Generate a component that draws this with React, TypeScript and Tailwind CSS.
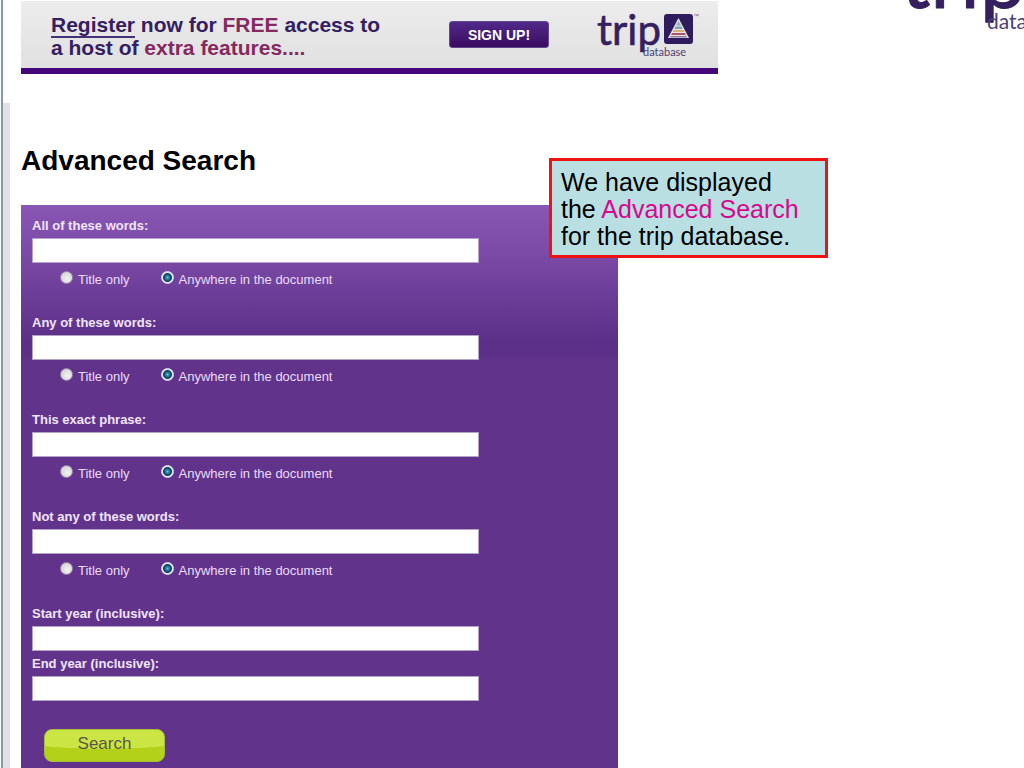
const wordFields = [
  { id: "all", label: "All of these words:" },
  { id: "any", label: "Any of these words:" },
  { id: "phrase", label: "This exact phrase:" },
  { id: "none", label: "Not any of these words:" },
];

const inputClass = "block h-[25px] w-full border border-[#b3a3c6] bg-white px-1 text-sm text-black outline-none";
const labelClass = "block text-[13px] leading-[18px] font-bold text-[#f1e6fa]";
const radioClass =
  "size-[13px] appearance-none rounded-full border border-[#9a8aa8] bg-[radial-gradient(circle_at_60%_60%,#f4f4f2,#c9c6cc)] checked:border-[#d5dce4] checked:bg-[radial-gradient(circle,#6fc4da_0px,#1e7896_2px,#123a5c_4px,#e8eef0_5px,#dfe4e8_6px)]";

function SmallLogo() {
  return (
    <svg width="108" height="50" viewBox="0 0 108 50" role="img" aria-label="trip database">
      <text x="3" y="35" fontFamily="Lato, sans-serif" fontSize="42" fill="#35205f" stroke="#35205f" strokeWidth="0.6" strokeLinejoin="round">
        trip
      </text>
      <text x="49" y="46" fontFamily="Lato, sans-serif" fontSize="11" fill="#4d4175">
        database
      </text>
      <rect x="70" y="4" width="29" height="30" rx="3" fill="#2e1c5c" />
      <path d="M84.5 8 95 28H74Z" fill="#e9e2e4" />
      <path d="M84.5 11 87 15.5H82Z" fill="#8fb0b5" />
      <path d="M81.5 16.5H87.5L88.5 19H80.5Z" fill="#7fa4b4" />
      <path d="M79.5 20H89.5L90.5 22H78.5Z" fill="#d9b07c" />
      <path d="M78 23H91L92 25H77Z" fill="#a95768" />
      <path d="M76.5 26H92.5L93 27.5H76Z" fill="#8d7aa5" />
      <text x="99" y="8" fontFamily="Liberation Sans, sans-serif" fontSize="6" fill="#6d6388">
        ™
      </text>
    </svg>
  );
}

function LargeLogo() {
  return (
    <svg width="124" height="34" viewBox="0 0 124 34" className="ml-auto shrink-0" role="img" aria-label="trip database">
      <text x="1" y="8" fontFamily="Lato, sans-serif" fontSize="82" fill="#35205f" stroke="#35205f" strokeWidth="1" strokeLinejoin="round">
        trip
      </text>
      <text x="87" y="29" fontFamily="Lato, sans-serif" fontSize="21" fill="#4d4175">
        database
      </text>
    </svg>
  );
}

function Banner() {
  return (
    <div className="mt-px flex h-[73px] w-full max-w-[697px] items-start border-b-[6px] border-[#45087a] bg-linear-to-b from-[#ededed] to-[#e0e0e0] pr-4 pl-[30px]">
      <p className="pt-3 text-[21px] leading-[23px] font-bold text-[#35205f]">
        <a href="#register" className="border-b-2 border-[#45307a]">Register</a> now for <span className="text-[#842a5e]">FREE</span> access to
        <br />a host of <span className="text-[#842a5e]">extra features....</span>
      </p>
      <button className="mt-5 ml-auto h-[27px] w-[100px] rounded-[3px] border border-[#62498c] bg-linear-to-b from-[#51298a] to-[#3a0b60] text-sm font-bold text-white">
        SIGN UP!
      </button>
      <div className="ml-[45px] pt-[9px]">
        <SmallLogo />
      </div>
    </div>
  );
}

function WordField({ id, label }: { id: string; label: string }) {
  return (
    <div className="mb-6">
      <label htmlFor={id} className={labelClass}>{label}</label>
      <input id={id} type="text" className={`mt-[3px] ${inputClass}`} />
      <div className="mt-[7px] flex gap-[31px] pl-7 text-[13px] leading-5 text-[#eadcf6]">
        <label className="flex items-start gap-[5px]">
          <input type="radio" name={`${id}-scope`} className={`mt-px ${radioClass}`} />
          Title only
        </label>
        <label className="flex items-start gap-[5px]">
          <input type="radio" name={`${id}-scope`} defaultChecked className={`mt-px ${radioClass}`} />
          Anywhere in the document
        </label>
      </div>
    </div>
  );
}

export default function App() {
  return (
    <div className="flex min-h-screen overflow-hidden bg-white pl-px font-['Liberation_Sans',Arial,sans-serif]">
      <div className="flex w-[9px] shrink-0 flex-col border-l-2 border-[#8299b3]">
        <div className="h-[103px]" />
        <div className="flex-1 bg-[#e2e2e2]" />
      </div>
      <div className="flex min-w-0 flex-1 flex-col pl-[11px]">
        <header className="flex items-start">
          <Banner />
          <LargeLogo />
        </header>
        <h1 className="mt-[71px] text-[28px] leading-8 font-bold text-black">Advanced Search</h1>
        <div className="relative mt-7 flex w-full max-w-[597px] flex-1 flex-col">
          <form
            className="flex-1 bg-[#62338b] bg-[linear-gradient(to_bottom,#8856b3_0px,#7b4aa6_50px,#5c3088_135px,#5c3088_150px,#62338b_156px)] px-[11px] pt-3 pb-[6px]"
            onSubmit={(e) => e.preventDefault()}
          >
            <div className="max-w-[447px]">
              {wordFields.map((f) => (
                <WordField key={f.id} id={f.id} label={f.label} />
              ))}
              <label htmlFor="start" className={labelClass}>Start year (inclusive):</label>
              <input id="start" type="text" className={`mt-[3px] mb-1 ${inputClass}`} />
              <label htmlFor="end" className={labelClass}>End year (inclusive):</label>
              <input id="end" type="text" className={`mt-[3px] ${inputClass}`} />
            </div>
            <button
              type="submit"
              className="mt-7 ml-3 block h-[33px] w-[121px] rounded-lg border border-[#a6bd3c] bg-[#b3d118] bg-[radial-gradient(ellipse_120px_19px_at_50%_0%,#cbe545_97%,transparent_100%)] pb-1 text-[17px] text-[#5b5546]"
            >
              Search
            </button>
          </form>
          <aside className="absolute top-[-47px] left-[528px] w-[279px] border-[3px] border-[#ec1313] bg-[#b9dfe2] px-[9px] pt-2 pb-[5px] text-[25px] leading-[27px] text-black">
            We have displayed
            <br />
            the <span className="text-[#d6088c]">Advanced Search</span>
            <br />
            for the trip database.
          </aside>
        </div>
      </div>
    </div>
  );
}
